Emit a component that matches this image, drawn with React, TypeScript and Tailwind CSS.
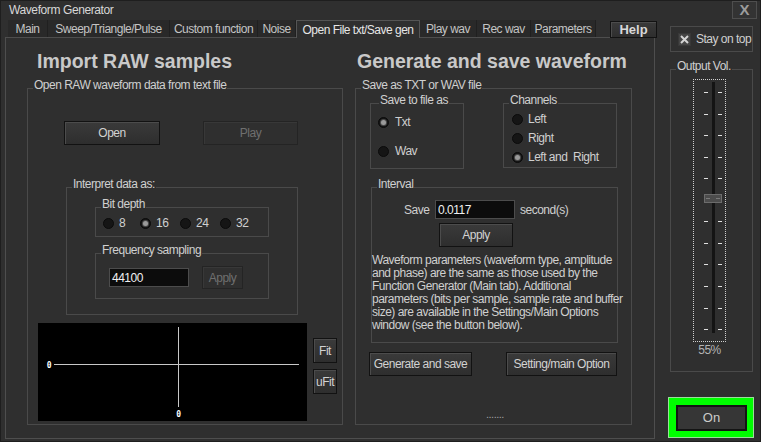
import React from 'react';

const FONT = "font-['Liberation_Sans',Arial,sans-serif]";

interface BoxProps {
  label?: string;
  className?: string;
  labelLeft?: string;
  children?: React.ReactNode;
}

function GroupBox({ label, className = '', labelLeft = 'left-[5px]', children }: BoxProps) {
  return (
    <div className={`relative border border-[#4a4a4a] ${className}`}>
      {label && (
        <span className={`absolute top-[-11px] ${labelLeft} px-[1px] bg-[#2f2f2f] leading-[14px] whitespace-nowrap`}>
          {label}
        </span>
      )}
      {children}
    </div>
  );
}

function Button({ children, className = '', disabled = false }: { children: React.ReactNode; className?: string; disabled?: boolean }) {
  return (
    <div
      className={`flex items-center justify-center shrink-0 whitespace-nowrap ${
        disabled
          ? 'border border-[#242424] bg-[#2f2f2f] text-[#6f6f6f] shadow-[inset_1px_1px_0_#383838]'
          : 'border border-[#121212] bg-gradient-to-b from-[#3a3a3a] to-[#2e2e2e] text-[#d2d2d2] shadow-[inset_1px_1px_0_#4c4c4c]'
      } ${className}`}
    >
      {children}
    </div>
  );
}

function Radio({ checked = false }: { checked?: boolean }) {
  return (
    <span className="w-[11px] h-[11px] rounded-full bg-[#151515] border border-[#0b0b0b] flex items-center justify-center shrink-0">
      {checked && <span className="w-[5px] h-[5px] rounded-full bg-[#9a9a9a] shadow-[0_0_0_1px_#4a4a4a]" />}
    </span>
  );
}

function Input({ value, className = '' }: { value: string; className?: string }) {
  return (
    <div className={`bg-[#0c0c0c] border border-[#4c4c4c] text-[#f0f0f0] pl-[2px] flex items-center leading-[14px] ${className}`}>
      {value}
    </div>
  );
}

const tabs: [string, number][] = [
  ['Main', 40],
  ['Sweep/Triangle/Pulse', 122],
  ['Custom function', 88],
  ['Noise', 38],
  ['Open File txt/Save gen', 124],
  ['Play wav', 57],
  ['Rec wav', 54],
  ['Parameters', 65],
];

const ticks = [0, 1, 2, 3, 4, 6, 7, 8, 9, 10, 11].map((i) => 12 + i * 21.55);

export default function App() {
  return (
    <div className={`w-[761px] h-[442px] overflow-hidden bg-[#2f2f2f] text-[#d0d0d0] text-[12px] leading-[14px] tracking-[-0.5px] ${FONT} border border-[#1e1e1e] flex flex-col`}>
      {/* Title bar */}
      <div className="h-[18px] flex items-start justify-between shrink-0">
        <div className="pl-[8px] pt-[2px] leading-[15px] tracking-[-0.4px] text-[#d8d8d8]">Waveform Generator</div>
        <div className="w-[25px] h-[18px] mr-[3px] border border-[#4e4e4e] bg-[#333333] flex items-center justify-center text-[#9c9c9c] font-bold text-[15px] tracking-normal">
          X
        </div>
      </div>

      <div className="flex items-start">
        {/* Tabs + page */}
        <div className="ml-[4px] w-[653px]">
          <div className="h-[18px] flex items-stretch pl-[3px]">
            {tabs.map(([name, w]) => {
              const active = name.startsWith('Open File');
              return (
                <div
                  key={name}
                  style={{ width: w }}
                  className={`flex items-center justify-center whitespace-nowrap ${
                    active
                      ? 'bg-[#2f2f2f] border-t border-l border-r border-[#555555] text-[#e6e6e6] relative top-[1px] z-10'
                      : 'bg-[#292929] border-r border-[#202020] text-[#c4c4c4] mt-[1px]'
                  }`}
                >
                  {name}
                </div>
              );
            })}
            <Button className="ml-[14px] w-[47px] h-[17px] mt-[2px] font-bold text-[13px] text-[#d8d8d8] tracking-normal">Help</Button>
          </div>

          <div className="w-[650px] h-[402px] border border-[#4e4e4e] flex">
            {/* Left: Import RAW samples */}
            <div className="ml-[21px] w-[316px]">
              <div className="h-[50px] pt-[11px] pl-[10px] text-[19.5px] leading-[24px] font-bold text-[#c9c9c9] tracking-normal">
                Import RAW samples
              </div>
              <GroupBox label="Open RAW waveform data from text file" className="h-[337px]">
                <div className="flex mt-[32px] ml-[36px]">
                  <Button className="w-[96px] h-[24px]">Open</Button>
                  <Button disabled className="ml-[43px] w-[95px] h-[24px]">Play</Button>
                </div>

                <GroupBox label="Interpret data as:" className="mt-[42px] ml-[38px] w-[232px] h-[128px]">
                  <GroupBox label="Bit depth" className="mt-[19px] ml-[28px] w-[174px] h-[30px]">
                    <div className="flex items-center h-full pl-[7px] pt-[2px]">
                      {[
                        ['8', 37, false],
                        ['16', 40, true],
                        ['24', 40, false],
                        ['32', 40, false],
                      ].map(([v, w, c]) => (
                        <div key={v as string} style={{ width: w as number }} className="flex items-center">
                          <Radio checked={c as boolean} />
                          <span className="ml-[5px]">{v as string}</span>
                        </div>
                      ))}
                    </div>
                  </GroupBox>
                  <GroupBox label="Frequency sampling" className="mt-[16px] ml-[28px] w-[174px] h-[46px]">
                    <div className="flex items-center h-full pl-[13px] pt-[3px]">
                      <Input value="44100" className="w-[80px] h-[19px]" />
                      <Button disabled className="ml-[13px] w-[41px] h-[23px]">Apply</Button>
                    </div>
                  </GroupBox>
                </GroupBox>

                <div className="flex mt-[8px] ml-[10px]">
                  <div className="w-[269px] h-[98px] bg-black">
                    <svg width="269" height="98" viewBox="0 0 269 98">
                      <line x1="16" y1="41.5" x2="261" y2="41.5" stroke="#c8c8c8" strokeWidth="1" />
                      <line x1="140.5" y1="4" x2="140.5" y2="84" stroke="#c8c8c8" strokeWidth="1" />
                      <text x="11" y="44.5" fill="#ffffff" fontSize="8" fontWeight="bold" textAnchor="middle" fontFamily="DejaVu Sans Mono, monospace">0</text>
                      <text x="140.5" y="94" fill="#ffffff" fontSize="8" fontWeight="bold" textAnchor="middle" fontFamily="DejaVu Sans Mono, monospace">0</text>
                    </svg>
                  </div>
                  <div className="ml-[6px] pt-[15px] flex flex-col gap-[6px]">
                    <Button className="w-[24px] h-[25px]">Fit</Button>
                    <Button className="w-[24px] h-[25px]">uFit</Button>
                  </div>
                </div>
              </GroupBox>
            </div>

            {/* Right: Generate and save waveform */}
            <div className="ml-[12px] w-[277px]">
              <div className="h-[50px] pt-[11px] pl-[2px] text-[19.5px] leading-[24px] font-bold text-[#c9c9c9] whitespace-nowrap tracking-normal">
                Generate and save waveform
              </div>
              <GroupBox label="Save as TXT or WAV file" className="h-[337px]">
                <div className="flex mt-[14px] ml-[14px]">
                  <GroupBox label="Save to file as" labelLeft="left-[8px]" className="w-[94px] h-[66px]">
                    <div className="flex flex-col pl-[7px] pt-[12px]">
                      <div className="flex items-center h-[12px]">
                        <Radio checked />
                        <span className="ml-[6px]">Txt</span>
                      </div>
                      <div className="flex items-center h-[12px] mt-[17px]">
                        <Radio />
                        <span className="ml-[6px]">Wav</span>
                      </div>
                    </div>
                  </GroupBox>
                  <GroupBox label="Channels" className="ml-[39px] w-[114px] h-[65px]">
                    <div className="flex flex-col pl-[8px] pt-[9px] gap-[7px]">
                      {[
                        ['Left', false],
                        ['Right', false],
                        ['Left and  Right', true],
                      ].map(([t, c]) => (
                        <div key={t as string} className="flex items-center h-[12px]">
                          <Radio checked={c as boolean} />
                          <span className="ml-[5px] whitespace-pre">{t as string}</span>
                        </div>
                      ))}
                    </div>
                  </GroupBox>
                </div>

                <GroupBox label="Interval" className="mt-[18px] ml-[15px] w-[247px] h-[156px]">
                  <div className="flex items-center mt-[12px] pl-[32px]">
                    <span className="w-[25px]">Save</span>
                    <Input value="0.0117" className="ml-[6px] w-[80px] h-[19px]" />
                    <span className="ml-[5px]">second(s)</span>
                  </div>
                  <Button className="mt-[4px] ml-[67px] w-[74px] h-[24px]">Apply</Button>
                  <p className="mt-[7px] leading-[13px] whitespace-nowrap">
                    Waveform parameters (waveform type, amplitude
                    <br />
                    and phase) are the same as those used by the
                    <br />
                    Function Generator (Main tab). Additional
                    <br />
                    parameters (bits per sample, sample rate and buffer
                    <br />
                    size) are available in the Settings/Main Options
                    <br />
                    window (see the button below).
                  </p>
                </GroupBox>

                <div className="flex mt-[9px] ml-[13px]">
                  <Button className="w-[103px] h-[24px]">Generate and save</Button>
                  <Button className="ml-[34px] w-[111px] h-[24px]">Setting/main Option</Button>
                </div>
                <div className="mt-[33px] pl-[130px] leading-[10px] text-[#a0a0a0] text-[11px]">.......</div>
              </GroupBox>
            </div>
          </div>
        </div>

        {/* Right column */}
        <div className="ml-[12px] w-[83px] mt-[7px] flex flex-col">
          <GroupBox className="h-[26px] flex items-center pl-[7px]">
            <span className="w-[13px] h-[13px] bg-[#454545] border border-[#383838] flex items-center justify-center shrink-0">
              <svg width="9" height="9" viewBox="0 0 9 9">
                <path d="M1 1 L8 8 M8 1 L1 8" stroke="#d4d4d4" strokeWidth="2" />
              </svg>
            </span>
            <span className="ml-[5px] whitespace-nowrap">Stay on top</span>
          </GroupBox>

          <GroupBox label="Output Vol." className="mt-[17px] h-[303px]">
            <div className="ml-[22px] mt-[9px] w-[33px] h-[263px] border border-dotted border-[#d0d0d0]">
              <svg width="31" height="261" viewBox="0 0 31 261">
                <rect x="18" y="2" width="3" height="251" fill="#141414" />
                {ticks.map((y) => (
                  <g key={y}>
                    <rect x="10" y={Math.round(y)} width="4" height="1" fill="#e0e0e0" />
                    <rect x="24" y={Math.round(y)} width="4" height="1" fill="#e0e0e0" />
                  </g>
                ))}
                <rect x="10.5" y="114.5" width="17" height="8" fill="#4c4c4c" stroke="#6c6c6c" />
                <rect x="12" y="118" width="4" height="1" fill="#7a7a7a" />
                <rect x="22" y="118" width="4" height="1" fill="#7a7a7a" />
              </svg>
            </div>
            <div className="ml-[22px] w-[33px] mt-[2px] text-center text-[12px] leading-[12px] text-[#b4b4b4]">55%</div>
          </GroupBox>

          <div className="mt-[25px] -ml-[2px] w-[86px] h-[41px] bg-[#00ff00] border border-[#9adf9a] pl-[7px] pt-[7px]">
            <div className="w-[71px] h-[26px] border-2 border-[#141414] bg-[#363636] flex items-center justify-center text-[13px] text-[#cbcbcb] tracking-normal">
              On
            </div>
          </div>
        </div>
      </div>
    </div>
  );
}
